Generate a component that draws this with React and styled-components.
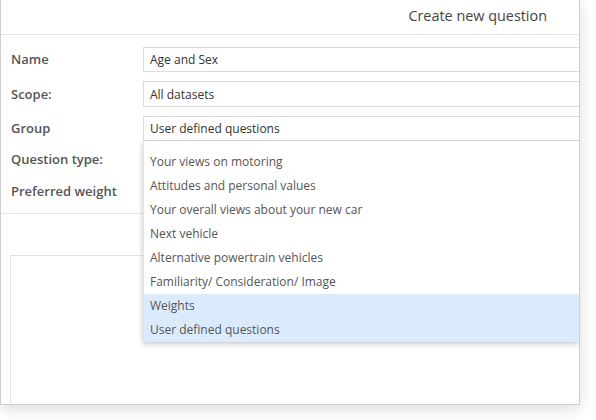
import React from "react";
import styled, { createGlobalStyle } from "styled-components";

const Global = createGlobalStyle`
  html, body { margin: 0; padding: 0; background: #fff; }
  body { font-family: "Open Sans", "Liberation Sans", sans-serif; }
  * { box-sizing: border-box; }
`;

const Stage = styled.div`
  width: 596px;
  height: 420px;
  overflow: hidden;
  background: #fff;
`;

const Dialog = styled.div`
  position: relative;
  width: 580px;
  height: 405px;
  border: 1px solid #cfcfcf;
  border-top: none;
  background: #fff;
  box-shadow: 0 4px 14px rgba(0, 0, 0, 0.14);
  overflow: hidden;
  display: flex;
  flex-direction: column;
`;

const Header = styled.div`
  height: 35px;
  flex: none;
  border-bottom: 1px solid #e3e3e3;
  display: flex;
  align-items: center;
  justify-content: flex-end;
  padding-right: 32px;
  font-size: 14.4px;
  color: #444;
  padding-bottom: 3px;
`;

const Form = styled.div`
  position: relative;
  padding-top: 12px;
  display: grid;
  grid-template-columns: 142px 1fr;
  row-gap: 9px;
  align-items: center;
`;

const Label = styled.div`
  padding-left: 10px;
  font-size: 13px;
  font-weight: 600;
  color: #555;
  height: ${(p) => p.$h || 25}px;
  line-height: ${(p) => p.$h || 25}px;
`;

const Input = styled.div`
  height: ${(p) => (p.$h ? p.$h : 25)}px;
  border: 1px solid #dcdcdc;
  border-right: none;
  padding-left: 6px;
  font-size: 12px;
  color: #333;
  display: flex;
  align-items: center;
`;

const Blank = styled.div`
  height: ${(p) => p.$h}px;
`;

const Separator = styled.div`
  margin-top: 8px;
  border-top: 1px solid #e6e6e6;
  flex: none;
`;

const Panel = styled.div`
  margin: 41px 0 0 9px;
  flex: 1;
  border: 1px solid #e3e3e3;
  border-right: none;
  border-bottom: none;
`;

const Dropdown = styled.div`
  position: absolute;
  left: 142px;
  right: 0;
  top: 106px;
  height: 201px;
  padding-top: 4px;
  background: #fff;
  border-left: 1px solid #e6e6e6;
  box-shadow: 0 3px 5px rgba(0, 0, 0, 0.16), -2px 0 4px rgba(0, 0, 0, 0.06);
  z-index: 2;
`;

const Viewport = styled.div`
  height: 197px;
  overflow: hidden;
`;

const List = styled.ul`
  list-style: none;
  margin: -19px 0 0 0;
  padding: 0;
`;

const Item = styled.li`
  height: 24px;
  line-height: 24px;
  padding-left: 6px;
  font-size: 12px;
  color: #555;
  white-space: nowrap;
  background: ${(p) => (p.$active ? "#dcebfb" : "#fff")};
`;

const items = [
  "Your buying journey and history",
  "Your views on motoring",
  "Attitudes and personal values",
  "Your overall views about your new car",
  "Next vehicle",
  "Alternative powertrain vehicles",
  "Familiarity/ Consideration/ Image",
  "Weights",
  "User defined questions",
];

export default function App() {
  return (
    <Stage>
      <Global />
      <Dialog>
        <Header>Create new question</Header>
        <Form>
          <Label>Name</Label>
          <Input>Age and Sex</Input>
          <Label $h={26}>Scope:</Label>
          <Input $h={26}>All datasets</Input>
          <Label>Group</Label>
          <Input>User defined questions</Input>
          <Label $h={18}>Question type:</Label>
          <Blank $h={18} />
          <Label $h={28}>Preferred weight</Label>
          <Blank $h={28} />
          <Dropdown>
            <Viewport>
              <List>
                {items.map((t, i) => (
                  <Item key={t} $active={i >= 7}>
                    {t}
                  </Item>
                ))}
              </List>
            </Viewport>
          </Dropdown>
        </Form>
        <Separator />
        <Panel />
      </Dialog>
    </Stage>
  );
}
